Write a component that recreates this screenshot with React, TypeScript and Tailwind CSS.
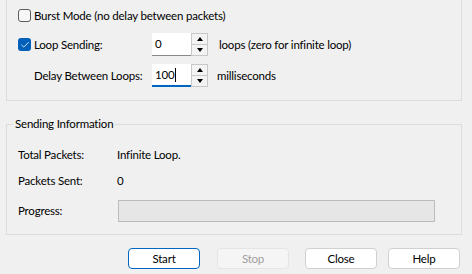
import { Check } from "lucide-react";

const font = { fontFamily: 'Lato, "Noto Sans", sans-serif' };

function CheckBox({ checked }: { checked?: boolean }) {
  if (checked) {
    return (
      <span className="w-[13px] h-[13px] rounded-[3px] bg-[#005fb8] flex items-center justify-center shrink-0">
        <Check size={10} strokeWidth={2} className="text-white" />
      </span>
    );
  }
  return <span className="w-[13px] h-[13px] rounded-[3px] border border-[#5c5c5c] bg-[#f7f7f7] shrink-0" />;
}

function Spinner() {
  return (
    <div className="w-[17px] h-[23px] border border-[#c8c8c8] bg-[#f3f3f3] flex flex-col">
      <div className="flex-1 flex items-center justify-center border-b border-[#c8c8c8]">
        <span className="w-0 h-0 border-x-[3px] border-x-transparent border-b-[4px] border-b-black" />
      </div>
      <div className="flex-1 flex items-center justify-center">
        <span className="w-0 h-0 border-x-[3px] border-x-transparent border-t-[4px] border-t-black" />
      </div>
    </div>
  );
}

function NumberBox({ value, focused }: { value: string; focused?: boolean }) {
  return (
    <div className="flex items-start">
      <div
        className={`w-[39px] h-[23px] bg-white flex items-center pl-[3px] ${
          focused ? "border-b-2 border-[#0067c0]" : "border-b border-[#8a8a8a]"
        }`}
      >
        <span className="text-black">{value}</span>
        {focused && <span className="w-px h-[14px] bg-black ml-px" />}
      </div>
      <Spinner />
    </div>
  );
}

function Button({ label, primary, disabled }: { label: string; primary?: boolean; disabled?: boolean }) {
  return (
    <button
      className={`w-[72px] h-[21px] rounded-[4px] border flex items-center justify-center ${
        primary
          ? "border-[#0067c0] bg-white text-black"
          : disabled
          ? "border-[#e5e5e5] bg-[#f5f5f5] text-[#a0a0a0]"
          : "border-[#d0d0d0] bg-white text-black"
      }`}
    >
      {label}
    </button>
  );
}

export default function App() {
  return (
    <div
      className="w-[472px] h-[274px] bg-[#f0f0f0] text-[11.5px] tracking-[-0.2px] text-black overflow-hidden whitespace-nowrap"
      style={font}
    >
      {/* Loop options group (top edge scrolled off) */}
      <div className="ml-[6px] mr-[10px] h-[101px] border-x border-b border-[#dcdcdc] pl-[11px] pt-[9px]">
        <div className="h-[13px] flex items-center gap-[3px]">
          <CheckBox />
          <span>Burst Mode (no delay between packets)</span>
        </div>
        <div className="mt-[11px] h-[23px] flex items-center">
          <div className="w-[134px] flex items-center gap-[3px]">
            <CheckBox checked />
            <span>Loop Sending:</span>
          </div>
          <NumberBox value="0" />
          <span className="ml-[11px]">loops (zero for infinite loop)</span>
        </div>
        <div className="mt-[8px] h-[23px] flex items-center">
          <span className="w-[134px] pl-[16px]">Delay Between Loops:</span>
          <NumberBox value="100" focused />
          <span className="ml-[9px]">milliseconds</span>
        </div>
      </div>

      {/* Sending Information */}
      <fieldset className="ml-[6px] mr-[10px] mt-[16px] h-[118px] border border-[#dcdcdc] pl-[11px] pr-[26px]">
        <legend className="ml-[-5px] px-[2px] leading-[14px]">Sending Information</legend>
        <div className="mt-[16px] h-[16px] flex items-center">
          <span className="w-[99px]">Total Packets:</span>
          <span>Infinite Loop.</span>
        </div>
        <div className="mt-[10px] h-[16px] flex items-center">
          <span className="w-[99px]">Packets Sent:</span>
          <span>0</span>
        </div>
        <div className="mt-[11px] h-[22px] flex items-center">
          <span className="w-[100px]">Progress:</span>
          <div className="flex-1 h-[22px] bg-[#e6e6e6] border border-[#bcbcbc]" />
        </div>
      </fieldset>

      <div className="mt-[13px] flex pl-[128px]">
        <Button label="Start" primary />
        <div className="ml-[17px]">
          <Button label="Stop" disabled />
        </div>
        <div className="ml-[16px]">
          <Button label="Close" />
        </div>
        <div className="ml-[11px]">
          <Button label="Help" />
        </div>
      </div>
    </div>
  );
}
